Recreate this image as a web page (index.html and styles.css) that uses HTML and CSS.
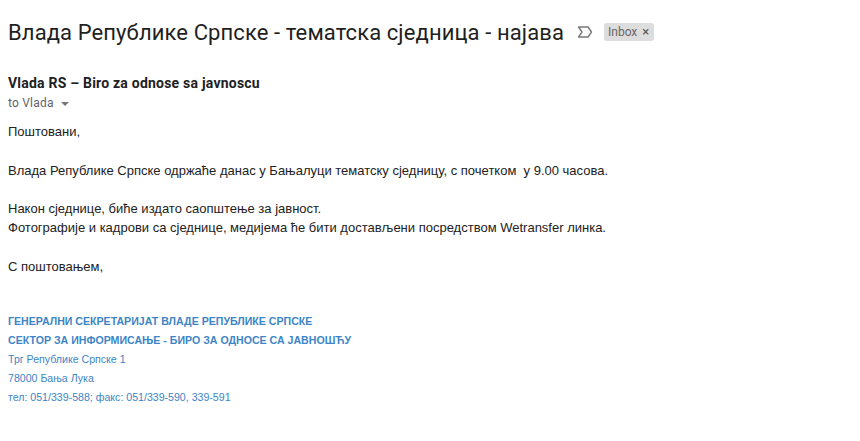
FILE: index.html
```html
<!DOCTYPE html>
<html>
  <head>
    <title>Влада Републике Српске - тематска сједница - најава</title>
    <link rel="stylesheet" href="styles.css">
  </head>
  <body>

    <div class="subjectRow">
        <h2 class="subject">Влада Републике Српске - тематска сједница - најава</h2>
        <svg class="marker" width="16" height="12" viewBox="0 0 16 12">
            <path d="M1.5 1h9.5l3.5 5-3.5 5h-9.5l3.5-5z" fill="none" stroke="#777" stroke-width="1.4" stroke-linejoin="round"/>
        </svg>
        <span class="label">Inbox <span class="labelX">×</span></span>
    </div>

    <div class="sender">
        <div class="senderName">Vlada RS – Biro za odnose sa javnoscu</div>
        <div class="recipients">to Vlada <span class="caret"></span></div>
    </div>

    <div class="messageBody">
        <p>Поштовани,</p>
        <br>
        <p>Влада Републике Српске одржаће данас у Бањалуци тематску сједницу, с почетком &nbsp;у 9.00 часова.</p>
        <br>
        <p>Након сједнице, биће издато саопштење за јавност.</p>
        <p>Фотографије и кадрови са сједнице, медијема ће бити достављени посредством Wetransfer линка.</p>
        <br>
        <p>С поштовањем,</p>

        <div class="signature">
            <p class="sigTitle">ГЕНЕРАЛНИ СЕКРЕТАРИЈАТ ВЛАДЕ РЕПУБЛИКЕ СРПСКЕ</p>
            <p class="sigTitle">СЕКТОР ЗА ИНФОРМИСАЊЕ - БИРО ЗА ОДНОСЕ СА ЈАВНОШЋУ</p>
            <p>Трг Републике Српске 1</p>
            <p>78000 Бања Лука</p>
            <p>тел: 051/339-588; факс: 051/339-590, 339-591</p>
        </div>
    </div>

  </body>
</html>
```

FILE: styles.css
```css
body { margin: 0; padding: 0 8px; background: #fff; color: #222; font-family: "Liberation Sans", Arial, sans-serif; }

.subjectRow { display: flex; align-items: center; height: 64px; }
.subject { margin: 0; font-family: Roboto, "Noto Sans", sans-serif; font-size: 22px; font-weight: 400; color: #1f1f1f; letter-spacing: 0.1px; }
.marker { margin-left: 13px; }
.label { margin-left: 11px; background: #ddd; color: #666; font-family: Roboto, sans-serif; font-size: 12px; padding: 1px 5px 1px 4px; border-radius: 3px; line-height: 15px; }
.labelX { color: #555; font-size: 13px; margin-left: 2px; }

.sender { padding-top: 9px; }
.senderName { font-family: Roboto, sans-serif; font-weight: 700; font-size: 14px; color: #202124; line-height: 20px; letter-spacing: 0.22px; }
.recipients { font-family: Roboto, sans-serif; font-size: 12px; color: #5f6368; line-height: 20px; letter-spacing: 0.2px; }
.caret { display: inline-block; width: 0; height: 0; border-left: 4px solid transparent; border-right: 4px solid transparent; border-top: 4px solid #777; margin-left: 4px; vertical-align: middle; }

.messageBody { padding-top: 9px; font-size: 13px; line-height: 19.3px; }
.messageBody p { margin: 0; }

.signature { padding-top: 36px; color: #3d85c6; font-size: 10.6px; line-height: 19px; }
.sigTitle { font-weight: 700; }
```
